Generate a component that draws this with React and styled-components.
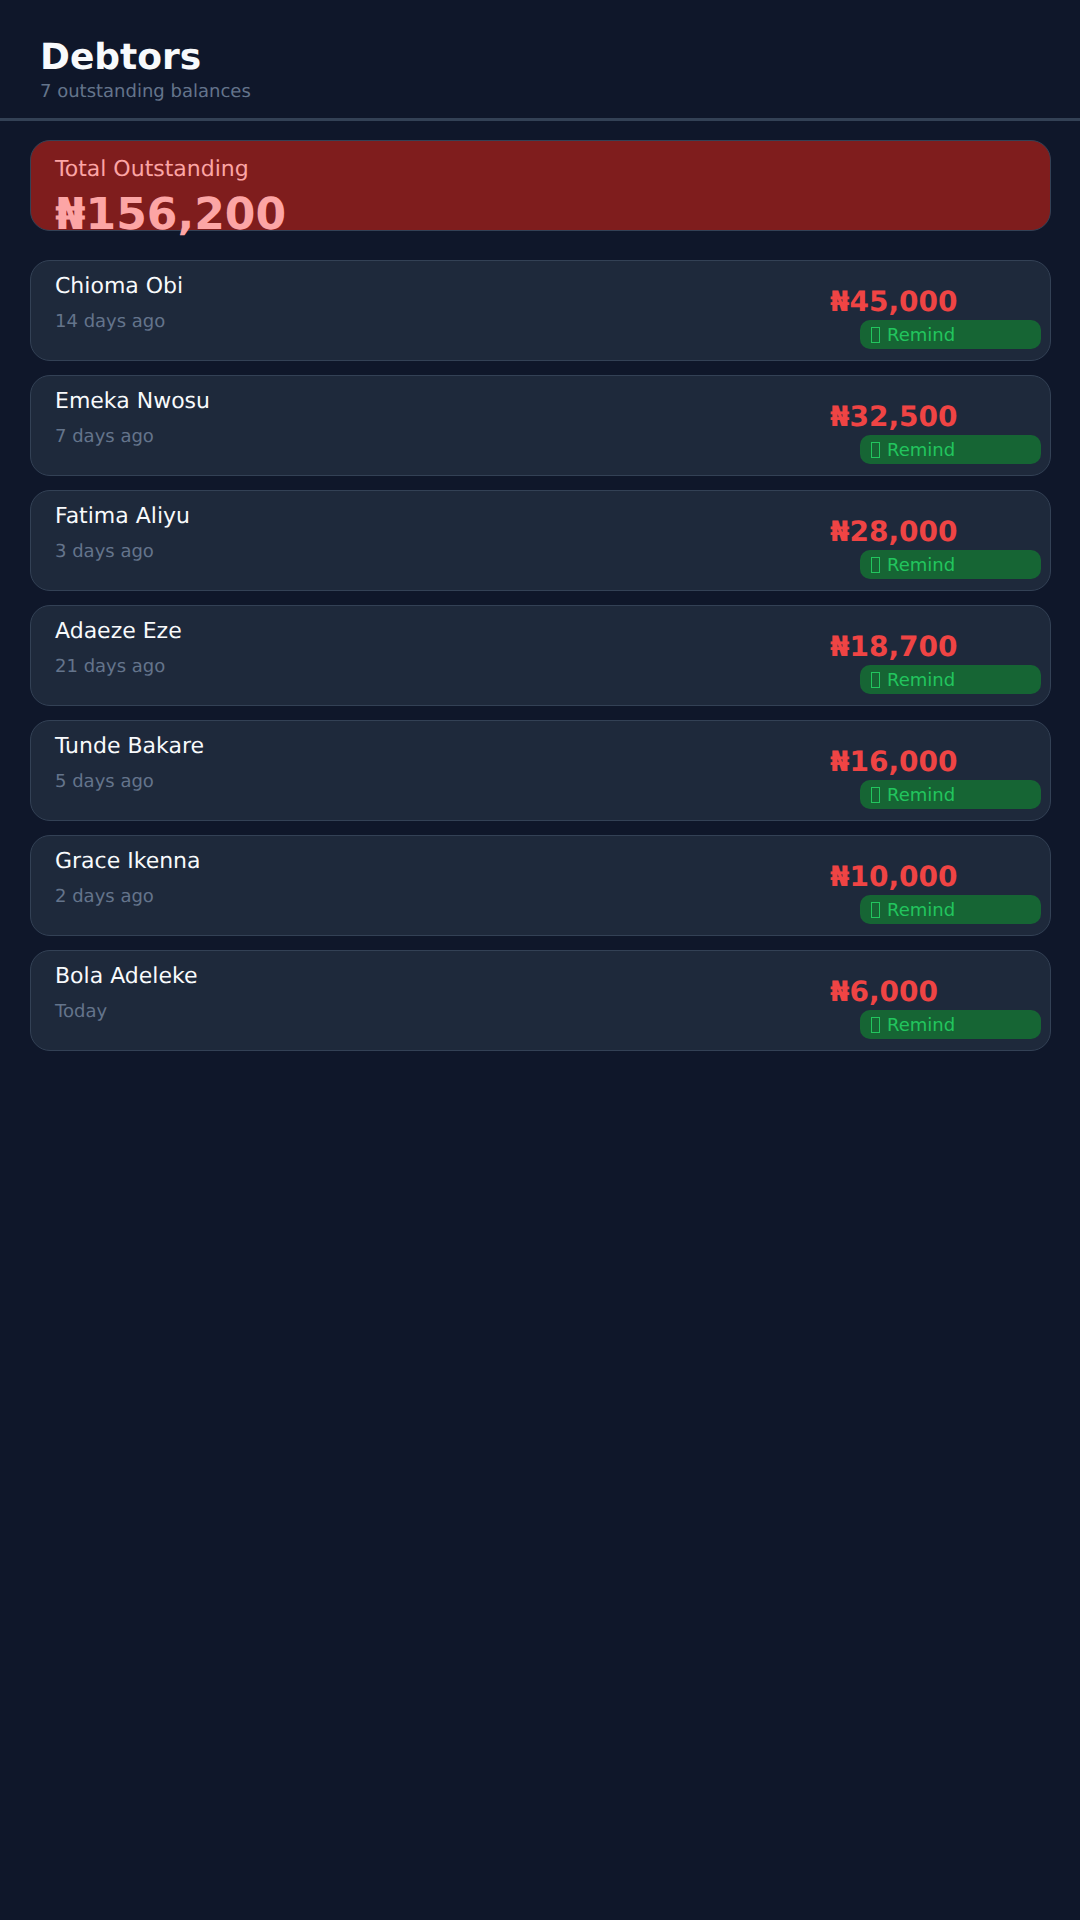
import styled, { createGlobalStyle } from "styled-components";

const debtors = [
  { name: "Chioma Obi", when: "14 days ago", amount: "₦45,000" },
  { name: "Emeka Nwosu", when: "7 days ago", amount: "₦32,500" },
  { name: "Fatima Aliyu", when: "3 days ago", amount: "₦28,000" },
  { name: "Adaeze Eze", when: "21 days ago", amount: "₦18,700" },
  { name: "Tunde Bakare", when: "5 days ago", amount: "₦16,000" },
  { name: "Grace Ikenna", when: "2 days ago", amount: "₦10,000" },
  { name: "Bola Adeleke", when: "Today", amount: "₦6,000" },
];

export default function App() {
  return (
    <Page>
      <GlobalStyle />
      <Header>
        <Title>Debtors</Title>
        <Subtitle>7 outstanding balances</Subtitle>
      </Header>

      <Content>
        <Summary>
          <SummaryLabel>Total Outstanding</SummaryLabel>
          <SummaryAmount>₦156,200</SummaryAmount>
        </Summary>

        <List>
          {debtors.map((d) => (
            <Card key={d.name}>
              <div>
                <Name>{d.name}</Name>
                <When>{d.when}</When>
              </div>
              <Side>
                <Amount>{d.amount}</Amount>
                <RemindButton>
                  <MissingGlyph />
                  Remind
                </RemindButton>
              </Side>
            </Card>
          ))}
        </List>
      </Content>
    </Page>
  );
}

const GlobalStyle = createGlobalStyle`
  html, body {
    margin: 0;
    padding: 0;
    background: #0f172a;
  }

  * {
    box-sizing: border-box;
  }
`;

const Page = styled.div`
  min-height: 1920px;
  background: #0f172a;
  font-family: "DejaVu Sans", sans-serif;
  text-rendering: geometricPrecision;
`;

const Header = styled.header`
  height: 121px;
  padding: 36px 40px 0;
  border-bottom: 3px solid #334155;
`;

const Title = styled.h1`
  margin: 0;
  font-size: 36px;
  line-height: 43px;
  font-weight: 700;
  color: #f8fafc;
`;

const Subtitle = styled.p`
  margin: 2px 0 0;
  font-size: 18px;
  line-height: 21px;
  color: #64748b;
`;

const Content = styled.main`
  padding: 19px 29px 20px 30px;
`;

const Summary = styled.section`
  height: 91px;
  padding: 16px 24px;
  border: 1px solid #334155;
  border-radius: 20px;
  background: #7f1d1d;
`;

const SummaryLabel = styled.div`
  font-size: 22px;
  line-height: 26px;
  color: #fca5a5;
`;

const SummaryAmount = styled.div`
  margin-top: 6px;
  font-size: 44px;
  line-height: 52px;
  font-weight: 700;
  color: #fca5a5;
`;

const List = styled.div`
  display: flex;
  flex-direction: column;
  gap: 14px;
  margin-top: 29px;
`;

const Card = styled.article`
  display: flex;
  justify-content: space-between;
  height: 101px;
  padding: 13px 8px 0 24px;
  border: 1px solid #334155;
  border-radius: 20px;
  background: #1e293b;
`;

const Name = styled.div`
  font-size: 22px;
  line-height: 26px;
  color: #f8fafc;
`;

const When = styled.div`
  margin-top: 11px;
  font-size: 18px;
  line-height: 21px;
  color: #64748b;
`;

const Side = styled.div`
  display: flex;
  flex-direction: column;
  width: 212px;
  padding-top: 11px;
`;

const Amount = styled.div`
  font-size: 28px;
  line-height: 33px;
  font-weight: 700;
  color: #ef4444;
`;

const RemindButton = styled.button`
  display: flex;
  align-items: center;
  height: 29px;
  margin: 2px 1px 0 30px;
  padding: 0 11px;
  border: 0;
  border-radius: 10px;
  background: #166534;
  color: #22c55e;
  font-family: inherit;
  font-size: 18px;
`;

// the reference shows an empty "missing glyph" box in front of the label
const MissingGlyph = styled.span`
  width: 9px;
  height: 16px;
  margin-right: 7px;
  border: 1px solid #22c55e;
`;
